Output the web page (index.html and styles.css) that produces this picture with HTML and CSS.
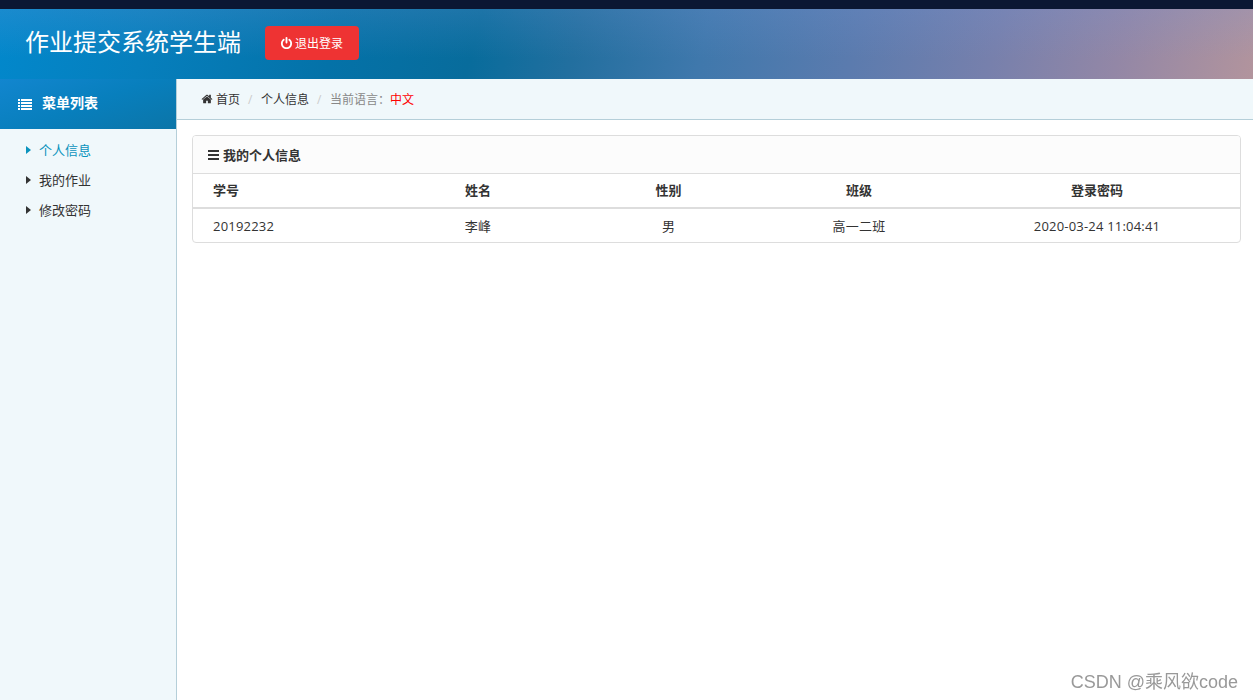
FILE: index.html
```html
<!DOCTYPE html>
<html lang="zh-CN">
<head>
  <meta charset="UTF-8">
  <title>作业提交系统学生端</title>
  <meta name="viewport" content="width=device-width, initial-scale=1.0">
  <link rel="stylesheet" href="styles.css">
</head>
<body>

  <!-- Header -->
  <header class="header">
    <h1>作业提交系统学生端</h1>
    <a class="button-logout" href="#">
      <svg class="icon" viewBox="0 0 1792 1792"><path d="M1664 896q0 156-61 298t-164 245-245 164-298 61-298-61-245-164-164-245-61-298q0-182 80.5-343t226.5-270q43-32 95.5-25t83.5 50q32 42 24.5 94.5t-49.5 84.5q-98 74-151.5 181t-53.5 228q0 104 40.5 198.5t109.5 163.5 163.5 109.5 198.5 40.5 198.5-40.5 163.5-109.5 109.5-163.5 40.5-198.5q0-121-53.5-228t-151.5-181q-42-32-49.5-84.5t24.5-94.5q31-43 84-50t95 25q146 109 226.5 270t80.5 343zm-640-768v640q0 52-38 90t-90 38-90-38-38-90v-640q0-52 38-90t90-38 90 38 38 90z"/></svg>
      <span>退出登录</span>
    </a>
  </header>

  <div class="wrapper">
    <!-- Left menu -->
    <nav class="leftnav">
      <div class="leftnav-title">
        <svg class="icon-list" viewBox="0 0 14 11"><path d="M0 0h2v2H0zM3 0h11v2H3zM0 3h2v2H0zM3 3h11v2H3zM0 6h2v2H0zM3 6h11v2H3zM0 9h2v2H0zM3 9h11v2H3z"/></svg>
        <strong>菜单列表</strong>
      </div>
      <ul>
        <li><a class="on" href="#"><span class="caret"></span>个人信息</a></li>
        <li><a href="#"><span class="caret"></span>我的作业</a></li>
        <li><a href="#"><span class="caret"></span>修改密码</a></li>
      </ul>
    </nav>

    <div class="main">
      <ul class="bread">
        <li>
          <a href="#">
            <svg class="icon-home" viewBox="0 0 1792 1792"><path d="M1472 992v480q0 26-19 45t-45 19h-384v-384h-256v384h-384q-26 0-45-19t-19-45v-480q0-1 .5-3t.5-3l575-474 575 474q1 2 1 6zm223-69l-62 74q-8 9-21 11h-3q-13 0-21-7l-692-577-692 577q-12 8-24 7-13-2-21-11l-62-74q-8-10-7-23.5t11-21.5l719-599q32-26 76-26t76 26l244 204v-195q0-14 9-23t23-9h192q14 0 23 9t9 23v408l219 182q10 8 11 21.5t-7 23.5z"/></svg>
            首页
          </a>
        </li>
        <li><a href="#">个人信息</a></li>
        <li><b>当前语言：</b><span class="lang">中文</span></li>
      </ul>

      <div class="admin">
        <div class="panel">
          <div class="panel-head">
            <svg class="icon-bars" viewBox="0 0 11 10"><path d="M0 0h11v2H0zM0 4h11v2H0zM0 8h11v2H0z"/></svg>
            <strong>我的个人信息</strong>
          </div>
          <table class="table">
            <colgroup>
              <col class="col-id">
              <col class="col-name">
              <col class="col-sex">
              <col class="col-class">
              <col>
            </colgroup>
            <tr>
              <th>学号</th>
              <th>姓名</th>
              <th>性别</th>
              <th>班级</th>
              <th>登录密码</th>
            </tr>
            <tr>
              <td>20192232</td>
              <td>李峰</td>
              <td>男</td>
              <td>高一二班</td>
              <td>2020-03-24 11:04:41</td>
            </tr>
          </table>
        </div>
      </div>
    </div>
  </div>

  <div class="watermark">CSDN @乘风欲code</div>

</body>
</html>
```
FILE: styles.css
```css
* { box-sizing: border-box; }

body {
  margin: 0;
  height: 100vh;
  display: flex;
  flex-direction: column;
  overflow: hidden;
  border-top: 9px solid #0b1733;
  font-family: "Open Sans", "Noto Sans CJK SC", sans-serif;
  font-size: 13px;
  color: #333;
  background: #fff;
}

a { color: inherit; text-decoration: none; }
ul { list-style: none; margin: 0; padding: 0; }
svg { fill: currentColor; flex: none; }

/* Header */
.header {
  height: 70px;
  flex: none;
  display: flex;
  align-items: flex-start;
  padding-left: 25px;
  color: #fff;
  background:
    linear-gradient(180deg, rgba(120, 150, 215, 0.2), rgba(120, 150, 215, 0) 70%),
    linear-gradient(105deg, #0288cc 0%, #067fbd 12%, #0472a8 27%, #086c9c 38%, #226f9f 46%, #3f78ac 56%, #5b7bae 68%, #7780ac 79%, #9387a6 89%, #b2949d 100%);
}

.header h1 {
  margin: 0 24px 0 0;
  font-size: 24px;
  font-weight: 400;
  line-height: 65px;
}

.button-logout {
  width: 94px;
  height: 34px;
  margin-top: 17px;
  padding-right: 1px;
  display: flex;
  align-items: center;
  justify-content: center;
  gap: 2px;
  border-radius: 4px;
  background: #ee3333;
  font-size: 12px;
}

.button-logout .icon { width: 13px; height: 13px; }

.wrapper { flex: 1; display: flex; min-height: 0; }

/* Left menu */
.leftnav {
  width: 177px;
  flex: none;
  border-right: 1px solid #b5cfd9;
  background: #f0f8fb;
}

.leftnav-title {
  height: 50px;
  width: 176px;
  display: flex;
  align-items: center;
  gap: 10px;
  padding-left: 18px;
  color: #fff;
  font-size: 14px;
  line-height: 20px;
  background: linear-gradient(160deg, #1286cf, #087fbd 50%, #0b75a8);
}

.leftnav-title strong { padding-bottom: 2px; }
.icon-list { width: 14px; height: 11px; }

.leftnav ul { padding-top: 6px; }

.leftnav li a {
  height: 30px;
  display: flex;
  align-items: center;
  padding: 0 0 2px 26px;
}

.leftnav li .on { color: #0a93bd; }

.caret {
  width: 0;
  height: 0;
  margin: 2px 8px 0 0;
  border: 4px solid transparent;
  border-left: 5px solid currentColor;
  border-right: 0;
}

/* Breadcrumb */
.main { flex: 1; min-width: 0; }

.bread {
  height: 41px;
  display: flex;
  align-items: center;
  padding-left: 24px;
  border-bottom: 1px solid #b5cfd9;
  background: #f0f8fb;
  font-size: 12px;
}

.bread li { display: flex; align-items: center; }
.bread li a { display: flex; align-items: center; gap: 3px; }
.bread li + li::before { content: "/"; width: 5px; margin: 0 8px; color: #ccc; }
.bread b { font-weight: 400; color: #888; }
.bread .lang { color: #f00; }
.icon-home { width: 12px; height: 12px; }

/* Info panel */
.admin { padding: 15px 12px 0 15px; }

.panel {
  border: 1px solid #ddd;
  border-radius: 4px;
  overflow: hidden;
}

.panel-head {
  height: 38px;
  display: flex;
  align-items: center;
  gap: 4px;
  padding-left: 15px;
  border-bottom: 1px solid #ddd;
  background: #fcfcfc;
}

.icon-bars { width: 11px; height: 10px; }

.table {
  width: 100%;
  table-layout: fixed;
  border-collapse: separate;
  border-spacing: 0;
}

.col-id { width: 190px; }
.col-name { width: 190px; }
.col-sex { width: 191px; }
.col-class { width: 190px; }

.table th, .table td {
  padding: 0;
  height: 33px;
  text-align: center;
  line-height: 20px;
}

.table th { height: 35px; padding-bottom: 2px; border-bottom: 2px solid #ddd; }
.table td { letter-spacing: 0.2px; }
.table th:first-child, .table td:first-child { text-align: left; padding-left: 20px; }

.watermark {
  position: fixed;
  right: 15px;
  bottom: 5px;
  font-family: "Liberation Sans", "Noto Sans CJK SC", sans-serif;
  font-size: 18px;
  line-height: 26px;
  color: #999;
}
```
